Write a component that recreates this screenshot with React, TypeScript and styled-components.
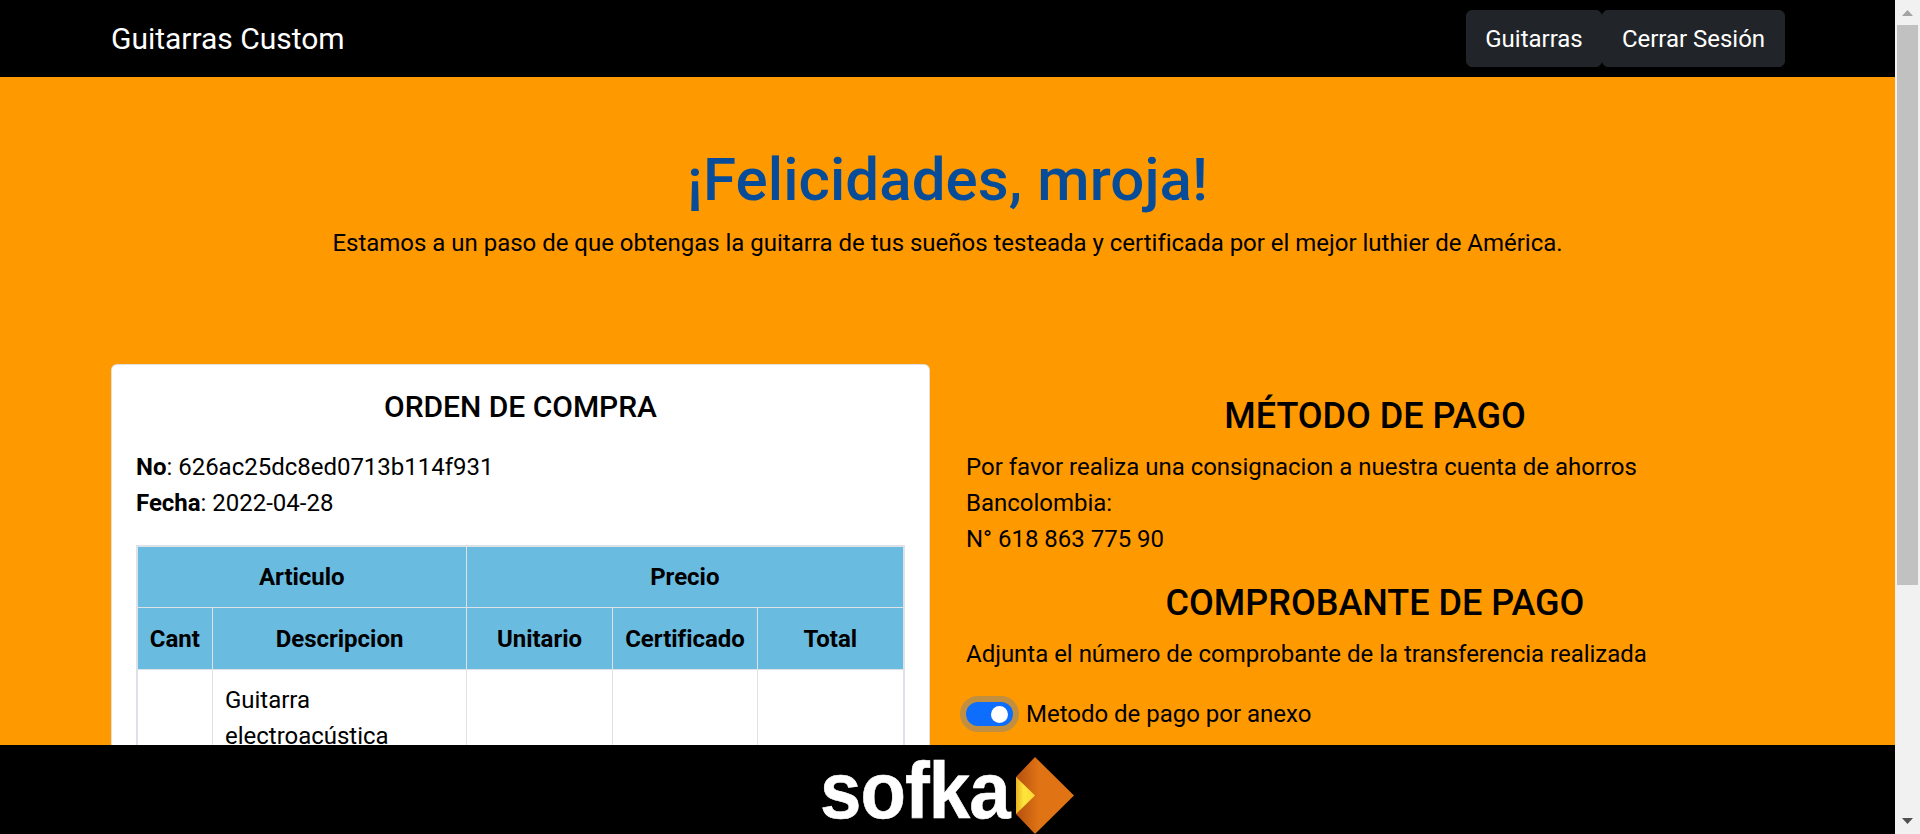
import React from "react";
import styled, { createGlobalStyle } from "styled-components";

const Global = createGlobalStyle`
  html, body { margin: 0; padding: 0; height: 100%; overflow: hidden; }
  body { font-family: Roboto, "Liberation Sans", sans-serif; font-size: 24px; line-height: 36px; letter-spacing: -0.015px; color: #000; }
  * { box-sizing: border-box; }
`;

const Shell = styled.div`
  display: flex;
  width: 1920px;
  height: 834px;
  overflow: hidden;
`;
const Page = styled.div`
  flex: 1;
  min-width: 0;
  display: flex;
  flex-direction: column;
  background: #ff9900;
`;
const NavBar = styled.nav`
  flex: none;
  height: 77px;
  background: #000;
  display: flex;
  align-items: center;
  justify-content: space-between;
  padding: 0 110px 0 111px;
`;
const Brand = styled.div`
  color: #fff;
  font-size: 30px;
  line-height: 45px;
`;
const NavActions = styled.div`
  display: flex;
`;
const NavButton = styled.div<{ $width: number }>`
  width: ${(p) => p.$width}px;
  height: 57px;
  display: flex;
  align-items: center;
  justify-content: center;
  white-space: nowrap;
  color: #fff;
  background: #212529;
  border: 1.5px solid #212529;
  border-radius: 6px;
  font-size: 24px;
`;
const Main = styled.main`
  flex: 1;
  min-height: 0;
  overflow: hidden;
  padding: 0 111px;
`;
const Hero = styled.header`
  height: 287px;
  padding-top: 67px;
  text-align: center;
`;
const HeroTitle = styled.h1`
  margin: 0 0 9px;
  font-size: 60px;
  line-height: 72px;
  font-weight: 500;
  letter-spacing: 0.1px;
  color: #064c99;
`;
const HeroText = styled.p`
  margin: 0;
`;
const Columns = styled.div`
  display: grid;
  grid-template-columns: 819px 1fr;
  column-gap: 36px;
  align-items: start;
`;
const Card = styled.section`
  background: #fff;
  border: 1.5px solid rgba(0, 0, 0, 0.125);
  border-radius: 6px;
  padding: 24px;
`;
const CardTitle = styled.h5`
  margin: 0 0 24px;
  font-size: 30px;
  line-height: 36px;
  font-weight: 500;
  text-align: center;
`;
const MetaLine = styled.div`
  line-height: 36px;
`;
const Orders = styled.table`
  width: 767px;
  margin: 24px 0 0 -0.5px;
  border-collapse: collapse;
  table-layout: fixed;
  border: 2px solid #dee2e6;
`;
const Cell = styled.td`
  border: 1.5px solid #dee2e6;
  padding: 12px;
  vertical-align: top;
`;
const HeadCell = styled.th<{ $height: number }>`
  background: #69bbe0;
  border: 1.5px solid #dee2e6;
  padding: 12px;
  font-weight: 700;
  text-align: center;
  height: ${(p) => p.$height}px;
`;
const Side = styled.section`
  padding-top: 25px;
`;
const SideTitle = styled.h4`
  margin: 0 0 6px;
  font-size: 36px;
  line-height: 54px;
  font-weight: 500;
  text-align: center;
`;
const SideText = styled.p`
  margin: 0 0 19px;
`;
const SwitchRow = styled.div`
  margin-top: 24px;
  display: flex;
  align-items: center;
  gap: 13px;
`;
const SwitchTrack = styled.span`
  position: relative;
  width: 47px;
  height: 24px;
  border-radius: 12px;
  background: #0d6efd;
  box-shadow: 0 0 0 6px rgba(13, 110, 253, 0.25);
`;
const SwitchKnob = styled.span`
  position: absolute;
  right: 5px;
  top: 3.5px;
  width: 17px;
  height: 17px;
  border-radius: 50%;
  background: #fff;
`;
const Footer = styled.footer`
  flex: none;
  height: 89px;
  background: #000;
  display: flex;
  align-items: flex-start;
  justify-content: center;
  overflow: hidden;
`;
const LogoWrap = styled.div`
  display: flex;
  align-items: flex-start;
  margin-left: -1px;
`;
const LogoWord = styled.span`
  display: block;
  width: 185px;
  margin-left: -1px;
  color: #fff;
  font-family: "Liberation Sans", Arial, sans-serif;
  font-weight: 700;
  font-size: 80px;
  line-height: 92px;
  letter-spacing: -1px;
  margin-right: 11px;
  white-space: nowrap;
  transform: scaleX(0.93);
  transform-origin: left center;
  -webkit-text-stroke: 0.6px #fff;
`;
const LogoMark = styled.svg`
  display: block;
  margin-top: 12px;
`;
const ScrollBar = styled.div`
  flex: none;
  width: 25px;
  height: 834px;
  background: #f1f1f1;
  display: flex;
  flex-direction: column;
  padding-left: 2px;
  padding-right: 2px;
`;
const ScrollArrow = styled.svg<{ $top?: number; $bottom?: number }>`
  flex: none;
  display: block;
  margin: ${(p) => p.$top ?? 0}px auto ${(p) => p.$bottom ?? 0}px;
`;
const ScrollThumb = styled.div`
  width: 21px;
  height: 560px;
  background: #c1c1c1;
  margin-top: 9px;
`;
const Spacer = styled.div`
  flex: 1;
`;

export default function App() {
  return (
    <Shell>
      <Global />
      <Page>
        <NavBar>
          <Brand>Guitarras Custom</Brand>
          <NavActions>
            <NavButton $width={136}>Guitarras</NavButton>
            <NavButton $width={183}>Cerrar Sesión</NavButton>
          </NavActions>
        </NavBar>
        <Main>
          <Hero>
            <HeroTitle>¡Felicidades, mroja!</HeroTitle>
            <HeroText>
              Estamos a un paso de que obtengas la guitarra de tus sueños testeada y certificada por el mejor luthier de América.
            </HeroText>
          </Hero>
          <Columns>
            <Card>
              <CardTitle>ORDEN DE COMPRA</CardTitle>
              <MetaLine><strong>No</strong>: 626ac25dc8ed0713b114f931</MetaLine>
              <MetaLine><strong>Fecha</strong>: 2022-04-28</MetaLine>
              <Orders>
                <colgroup>
                  <col style={{ width: 76 }} />
                  <col style={{ width: 254 }} />
                  <col style={{ width: 146 }} />
                  <col style={{ width: 145 }} />
                  <col style={{ width: 146 }} />
                </colgroup>
                <thead>
                  <tr>
                    <HeadCell $height={60} colSpan={2}>Articulo</HeadCell>
                    <HeadCell $height={60} colSpan={3}>Precio</HeadCell>
                  </tr>
                  <tr>
                    <HeadCell $height={62}>Cant</HeadCell>
                    <HeadCell $height={62}>Descripcion</HeadCell>
                    <HeadCell $height={62}>Unitario</HeadCell>
                    <HeadCell $height={62}>Certificado</HeadCell>
                    <HeadCell $height={62}>Total</HeadCell>
                  </tr>
                </thead>
                <tbody>
                  <tr>
                    <Cell />
                    <Cell>Guitarra electroacústica</Cell>
                    <Cell />
                    <Cell />
                    <Cell />
                  </tr>
                </tbody>
              </Orders>
            </Card>
            <Side>
              <SideTitle>MÉTODO DE PAGO</SideTitle>
              <SideText>
                Por favor realiza una consignacion a nuestra cuenta de ahorros Bancolombia:
                <br />
                N° 618 863 775 90
              </SideText>
              <SideTitle>COMPROBANTE DE PAGO</SideTitle>
              <SideText>Adjunta el número de comprobante de la transferencia realizada</SideText>
              <SwitchRow>
                <SwitchTrack><SwitchKnob /></SwitchTrack>
                Metodo de pago por anexo
              </SwitchRow>
            </Side>
          </Columns>
        </Main>
        <Footer>
          <LogoWrap>
            <LogoWord>sofka</LogoWord>
            <LogoMark width="58" height="77" viewBox="0 0 58 77">
              <defs>
                <linearGradient id="mark" x1="0" x2="1" y1="0" y2="0">
                  <stop offset="0" stopColor="#b5500f" />
                  <stop offset="0.4" stopColor="#e07414" />
                  <stop offset="1" stopColor="#e07414" />
                </linearGradient>
                <linearGradient id="spark" x1="0" x2="1" y1="0" y2="0">
                  <stop offset="0" stopColor="#e8b020" />
                  <stop offset="0.4" stopColor="#fde53c" />
                  <stop offset="1" stopColor="#fdd934" />
                </linearGradient>
              </defs>
              <polygon points="0,20 19,0 58,38.5 19,77 0,57" fill="url(#mark)" />
              <polygon points="0,20 19,38.5 0,57" fill="url(#spark)" />
            </LogoMark>
          </LogoWrap>
        </Footer>
      </Page>
      <ScrollBar>
        <ScrollArrow $top={10} width="11" height="6" viewBox="0 0 11 6">
          <polygon points="5.5,0 11,6 0,6" fill="#a3a3a3" />
        </ScrollArrow>
        <ScrollThumb />
        <Spacer />
        <ScrollArrow $bottom={10} width="11" height="6" viewBox="0 0 11 6">
          <polygon points="0,0 11,0 5.5,6" fill="#505050" />
        </ScrollArrow>
      </ScrollBar>
    </Shell>
  );
}
